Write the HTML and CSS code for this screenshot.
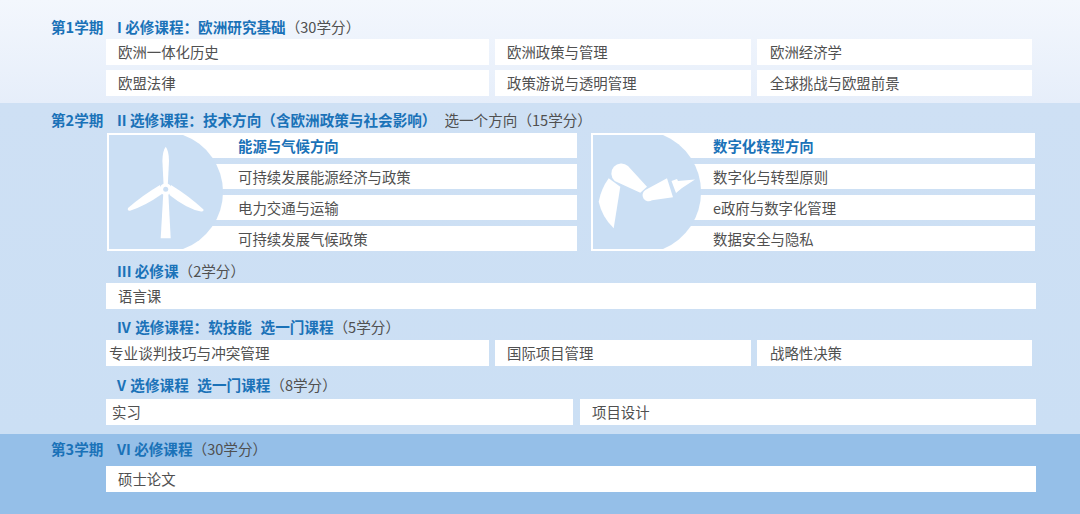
FILE: index.html
```html
<!DOCTYPE html>
<html lang="zh-CN">
<head>
<meta charset="utf-8">
<title>课程结构</title>
<link rel="stylesheet" href="styles.css">
</head>
<body>
<section class="band band-one">
  <div class="term">第1学期</div>
  <div class="content">
    <h2 class="heading"><b>I 必修课程：欧洲研究基础</b>（30学分）</h2>
    <div class="rows cols-three rows-close">
      <div class="cell">欧洲一体化历史</div>
      <div class="cell">欧洲政策与管理</div>
      <div class="cell cell-far">欧洲经济学</div>
      <div class="cell">欧盟法律</div>
      <div class="cell">政策游说与透明管理</div>
      <div class="cell cell-far">全球挑战与欧盟前景</div>
    </div>
  </div>
</section>
<section class="band band-two">
  <div class="term">第2学期</div>
  <div class="content">
    <h2 class="heading"><b>II 选修课程：技术方向（含欧洲政策与社会影响）</b><span class="aside">选一个方向（15学分）</span></h2>
    <div class="cards">
      <div class="card card-energy">
        <svg class="art" viewBox="0 0 130 118" aria-hidden="true">
          <rect width="2" height="118" fill="#fff"/>
          <path class="d" d="M2 2H76A60.6 60.6 0 0 1 76 116H2Z"/>
          <path class="w" d="M58.7 13.7Q62 18 62 28L60.8 52H56.6L55.4 28Q55.4 18 58.7 13.7Z"/>
          <path class="w" d="M56.3 60L53.7 105.3H63.7L61.3 60Z"/>
          <path class="w" d="M64 52Q82 63 96.5 76.5Q97 79 94 78.5Q80 76 62.5 62Z"/>
          <path class="w" d="M53 52Q36 62 21 75Q20 78 23 77.7Q38 73 55 61Z"/>
          <circle class="w" cx="58.7" cy="56.3" r="6"/>
          <circle class="d" cx="58.7" cy="56.3" r="2.5"/>
        </svg>
        <div class="card-row card-title">能源与气候方向</div>
        <div class="card-row">可持续发展能源经济与政策</div>
        <div class="card-row">电力交通与运输</div>
        <div class="card-row">可持续发展气候政策</div>
      </div>
      <div class="card card-digital">
        <svg class="art" viewBox="0 0 130 118" aria-hidden="true">
          <rect width="2" height="118" fill="#fff"/>
          <path class="d" d="M2 2H72A61.7 61.7 0 0 1 72 116H2Z"/>
          <path class="w" d="M37 33L56 53.7L49.3 59.7L23.7 48A9.3 9.3 0 0 1 37 33Z"/>
          <path class="w" d="M17.7 45.3L29.3 53.7L22.7 95.3Q11 84 7.7 68.7Q10 56 17.7 45.3Z"/>
          <path class="w" d="M54.3 57L76 45.3L82 64.3L61 67.3A6 6 0 0 1 54.3 57Z"/>
          <path class="w" d="M80.5 48L86 46L87 48L104 46.5L91 55L85 60Z"/>
        </svg>
        <div class="card-row card-title">数字化转型方向</div>
        <div class="card-row">数字化与转型原则</div>
        <div class="card-row">e政府与数字化管理</div>
        <div class="card-row">数据安全与隐私</div>
      </div>
    </div>
    <h2 class="heading heading-three"><b>III 必修课</b>（2学分）</h2>
    <div class="rows cols-one"><div class="cell">语言课</div></div>
    <h2 class="heading heading-four"><b>IV 选修课程：软技能&nbsp; 选一门课程</b>（5学分）</h2>
    <div class="rows cols-three rows-four">
      <div class="cell cell-tight">专业谈判技巧与冲突管理</div>
      <div class="cell">国际项目管理</div>
      <div class="cell cell-far">战略性决策</div>
    </div>
    <h2 class="heading heading-five"><b>V 选修课程&nbsp; 选一门课程</b>（8学分）</h2>
    <div class="rows cols-two">
      <div class="cell cell-short">实习</div>
      <div class="cell">项目设计</div>
    </div>
  </div>
</section>
<section class="band band-three">
  <div class="term">第3学期</div>
  <div class="content">
    <h2 class="heading"><b>VI 必修课程</b>（30学分）</h2>
    <div class="rows cols-one rows-thesis"><div class="cell">硕士论文</div></div>
  </div>
</section>
</body>
</html>
```

FILE: styles.css
```css
* { box-sizing: border-box; }
html, body { margin: 0; padding: 0; }
body {
  width: 1080px;
  height: 514px;
  overflow: hidden;
  font-family: "Noto Sans CJK SC", "Noto Sans", sans-serif;
  font-size: 14.4px;
  color: #505050;
}
.band { display: grid; grid-template-columns: 106px 1fr; }
.band-one { height: 103px; padding-top: 17px; background: linear-gradient(180deg, #f3f7fd 0%, #e6eefa 100%); }
.band-two { height: 331px; padding-top: 7px; background: linear-gradient(180deg, #cee0f4 0%, #cbdff4 100%); }
.band-three { height: 80px; padding-top: 5px; background: #95bfe8; }
.term {
  padding-left: 51px;
  height: 20px;
  line-height: 20px;
  font-size: 14.6px;
  font-weight: 700;
  color: #1a72b8;
}
.heading {
  margin: 0 0 2px;
  padding-left: 11px;
  height: 20px;
  line-height: 20px;
  font-size: 14.6px;
  font-weight: 400;
  color: #505050;
  white-space: nowrap;
}
.heading b { font-weight: 700; color: #1a72b8; }
.aside { margin-left: 8px; }
.heading-three { margin-top: 10px; }
.heading-four { margin-top: 8px; margin-bottom: 3px; word-spacing: 1px; }
.heading-five { margin-top: 9px; margin-bottom: 4px; word-spacing: 1px; }
.rows { display: grid; gap: 6px; }
.rows-close { row-gap: 5px; }
.cols-three { grid-template-columns: 383px 256px 275px; }
.cols-two { grid-template-columns: 467px 456px; gap: 7px; }
.cols-one { grid-template-columns: 930px; }
.rows-thesis { margin-top: 7px; }
.cell {
  height: 26px;
  line-height: 26px;
  padding-left: 12px;
  background: #fff;
}
.cell-tight { padding-left: 3px; font-size: 14.6px; }
.cell-short { padding-left: 6px; }
.cell-far { padding-left: 13px; }
.cards { display: flex; margin: 3px 0 0 1px; gap: 14px; }
.card {
  position: relative;
  display: flex;
  flex-direction: column;
  gap: 6px;
}
.card-energy { width: 470px; }
.card-digital { width: 444px; }
.card-energy .card-row { padding-left: 131px; }
.card-digital .card-row { padding-left: 122px; }
.card-row {
  height: 25px;
  line-height: 25px;
  background: #fff;
}
.card-title { font-weight: 700; color: #1a72b8; }
.art {
  position: absolute;
  left: 0;
  top: 0;
  width: 130px;
  height: 118px;
}
.d { fill: #cbdff4; }
.w { fill: #fff; }
```
